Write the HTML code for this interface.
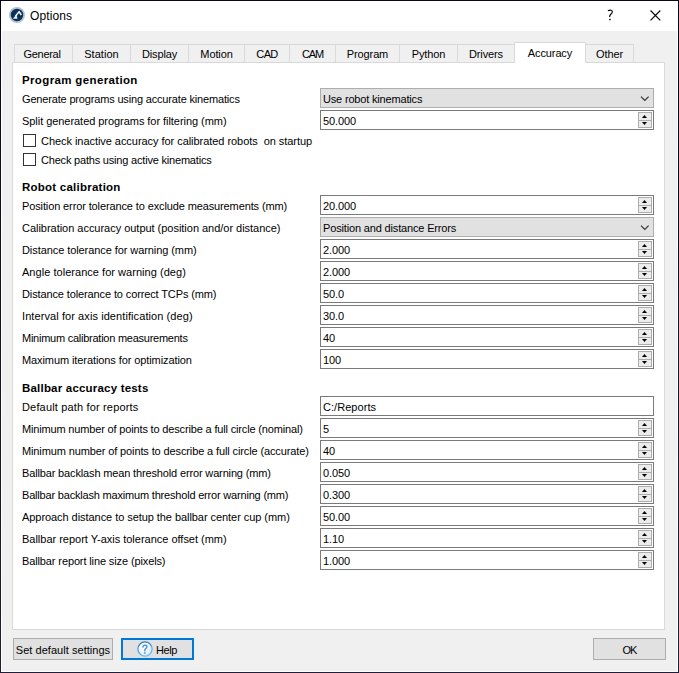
<!DOCTYPE html><html><head><meta charset="utf-8"><style>
html,body{margin:0;padding:0;}
body{width:679px;height:673px;overflow:hidden;position:relative;background:#f0f0f0;font-family:'Liberation Sans', sans-serif;}
body div{position:absolute;box-sizing:content-box;}
.t{font-size:11px;line-height:13px;letter-spacing:-0.12px;color:#000;white-space:pre;}
.b{font-weight:bold;font-size:11.5px;}
svg{position:absolute;}
</style></head><body>
<div style="left:0px;top:0px;width:679px;height:673px;background:#f0f0f0;"></div>
<div style="left:1px;top:1px;width:677px;height:30px;background:#ffffff;"></div>
<div style="left:1px;top:31px;width:1px;height:641px;background:#ffffff;"></div>
<div style="left:677px;top:31px;width:1px;height:641px;background:#ffffff;"></div>
<div style="left:1px;top:671px;width:677px;height:1px;background:#fcfcfa;"></div>
<div style="left:0px;top:0px;width:679px;height:1px;background:#07071a;"></div>
<div style="left:0px;top:0px;width:1px;height:673px;background:linear-gradient(#06061a,#1e1e3a);"></div>
<div style="left:678px;top:0px;width:1px;height:673px;background:linear-gradient(#06061a,#1e1e3a);"></div>
<div style="left:0px;top:672px;width:679px;height:1px;background:#1e1e3a;"></div>
<svg style="left:9px;top:7px" width="16" height="16" viewBox="0 0 16 16">
<circle cx="8" cy="8" r="8" fill="#b3c3d3"/>
<circle cx="8" cy="8" r="6.2" fill="#0c3259"/>
<path d="M3.9 11.8 L8.5 11.8 L7.4 7.6 Z" fill="#e8edf2"/>
<path d="M6.6 9 L10.1 4.6 L12.3 8" stroke="#ffffff" stroke-width="1.5" fill="none" stroke-linejoin="round"/>
</svg>
<div class="t" style="left:30px;top:9px;letter-spacing:0.117px;font-size:12px;line-height:14px;">Options</div>
<svg style="left:603px;top:7px" width="16" height="16" viewBox="0 0 16 16">
<path d="M4.9 3.7 Q6.5 3 8.1 3.2 Q9.6 3.6 9.3 5.1 Q9 6.2 7.8 7.2 Q6.6 8.2 6.6 9.9" stroke="#000" stroke-width="1.15" fill="none"/>
<circle cx="6.9" cy="12.5" r="0.85" fill="#000"/></svg>
<svg style="left:650px;top:10px" width="11" height="11" viewBox="0 0 11 11">
<path d="M0.5 0.5 L10.3 10.3 M10.3 0.5 L0.5 10.3" stroke="#000" stroke-width="1.1" fill="none"/>
</svg>
<div style="left:12px;top:62px;width:651px;height:566px;border:1px solid #d9d9d9;background:#ffffff;"></div>
<div style="left:14px;top:44px;width:57px;height:17px;border:1px solid #d9d9d9;background:#f0f0f0;border-bottom:none;height:17px;"></div>
<div class="t" style="left:12.55px;top:48px;width:59px;text-align:center;letter-spacing:-0.287px">General</div>
<div style="left:72px;top:44px;width:57px;height:17px;border:1px solid #d9d9d9;background:#f0f0f0;border-bottom:none;height:17px;"></div>
<div class="t" style="left:72px;top:48px;width:59px;text-align:center;letter-spacing:0.047px">Station</div>
<div style="left:130px;top:44px;width:57px;height:17px;border:1px solid #d9d9d9;background:#f0f0f0;border-bottom:none;height:17px;"></div>
<div class="t" style="left:130px;top:48px;width:59px;text-align:center;letter-spacing:-0.120px">Display</div>
<div style="left:188px;top:44px;width:55px;height:17px;border:1px solid #d9d9d9;background:#f0f0f0;border-bottom:none;height:17px;"></div>
<div class="t" style="left:188px;top:48px;width:57px;text-align:center;letter-spacing:-0.120px">Motion</div>
<div style="left:244px;top:44px;width:44px;height:17px;border:1px solid #d9d9d9;background:#f0f0f0;border-bottom:none;height:17px;"></div>
<div class="t" style="left:244px;top:48px;width:46px;text-align:center;letter-spacing:-0.620px">CAD</div>
<div style="left:289px;top:44px;width:45px;height:17px;border:1px solid #d9d9d9;background:#f0f0f0;border-bottom:none;height:17px;"></div>
<div class="t" style="left:289px;top:48px;width:47px;text-align:center;letter-spacing:-1.120px">CAM</div>
<div style="left:335px;top:44px;width:63px;height:17px;border:1px solid #d9d9d9;background:#f0f0f0;border-bottom:none;height:17px;"></div>
<div class="t" style="left:335px;top:48px;width:65px;text-align:center;letter-spacing:-0.120px">Program</div>
<div style="left:399px;top:44px;width:57px;height:17px;border:1px solid #d9d9d9;background:#f0f0f0;border-bottom:none;height:17px;"></div>
<div class="t" style="left:399px;top:48px;width:59px;text-align:center;letter-spacing:-0.120px">Python</div>
<div style="left:457px;top:44px;width:56px;height:17px;border:1px solid #d9d9d9;background:#f0f0f0;border-bottom:none;height:17px;"></div>
<div class="t" style="left:457px;top:48px;width:58px;text-align:center;letter-spacing:-0.120px">Drivers</div>
<div style="left:585px;top:44px;width:47px;height:17px;border:1px solid #d9d9d9;background:#f0f0f0;border-bottom:none;height:17px;"></div>
<div class="t" style="left:585px;top:48px;width:49px;text-align:center;">Other</div>
<div style="left:514px;top:42px;width:70px;height:20px;border:1px solid #d9d9d9;border-bottom:none;background:#fff;"></div>
<div class="t" style="left:514px;top:47px;width:72px;text-align:center;">Accuracy</div>
<div class="t b" style="left:22px;top:74px;letter-spacing:0.36px">Program generation</div>
<div class="t" style="left:22px;top:93px;letter-spacing:-0.168px;">Generate programs using accurate kinematics</div>
<div style="left:320px;top:88px;width:332px;height:18px;border:1px solid #adadad;background:#e1e1e1;"></div>
<div class="t" style="left:323px;top:93px;letter-spacing:-0.173px;">Use robot kinematics</div>
<svg style="left:640px;top:96px" width="10" height="6" viewBox="0 0 10 6"><path d="M1 0.6 L4.8 4.4 L8.6 0.6" stroke="#333" stroke-width="1.2" fill="none"/></svg>
<div class="t" style="left:22px;top:115px;letter-spacing:-0.049px;">Split generated programs for filtering (mm)</div>
<div style="left:320px;top:110px;width:332px;height:18px;border:1px solid #7a7a7a;background:#ffffff;"></div>
<div class="t" style="left:323px;top:115px;letter-spacing:-0.120px;">50.000</div>
<div style="left:638px;top:112px;width:12px;height:7px;border:1px solid #adadad;background:#ececec;"></div>
<div style="left:638px;top:120px;width:12px;height:6px;border:1px solid #adadad;background:#ececec;"></div>
<svg style="left:642px;top:115px" width="5" height="3" viewBox="0 0 5 3"><path d="M2.5 0 L5 3 L0 3 Z" fill="#000"/></svg>
<svg style="left:642px;top:122px" width="5" height="3" viewBox="0 0 5 3"><path d="M0 0 L5 0 L2.5 3 Z" fill="#000"/></svg>
<div style="left:23px;top:134px;width:11px;height:11px;border:1px solid #333333;background:#ffffff;"></div>
<div class="t" style="left:41px;top:135px;letter-spacing:-0.049px;">Check inactive accuracy for calibrated robots  on startup</div>
<div style="left:23px;top:153px;width:11px;height:11px;border:1px solid #333333;background:#ffffff;"></div>
<div class="t" style="left:41px;top:154px;letter-spacing:-0.194px;">Check paths using active kinematics</div>
<div class="t b" style="left:22px;top:181px;letter-spacing:0.24px">Robot calibration</div>
<div class="t" style="left:22px;top:200px;letter-spacing:-0.120px;">Position error tolerance to exclude measurements (mm)</div>
<div style="left:320px;top:195px;width:332px;height:18px;border:1px solid #7a7a7a;background:#ffffff;"></div>
<div class="t" style="left:323px;top:200px;letter-spacing:-0.120px;">20.000</div>
<div style="left:638px;top:197px;width:12px;height:7px;border:1px solid #adadad;background:#ececec;"></div>
<div style="left:638px;top:205px;width:12px;height:6px;border:1px solid #adadad;background:#ececec;"></div>
<svg style="left:642px;top:200px" width="5" height="3" viewBox="0 0 5 3"><path d="M2.5 0 L5 3 L0 3 Z" fill="#000"/></svg>
<svg style="left:642px;top:207px" width="5" height="3" viewBox="0 0 5 3"><path d="M0 0 L5 0 L2.5 3 Z" fill="#000"/></svg>
<div class="t" style="left:22px;top:222px;letter-spacing:-0.026px;">Calibration accuracy output (position and/or distance)</div>
<div style="left:320px;top:217px;width:332px;height:18px;border:1px solid #adadad;background:#e1e1e1;"></div>
<div class="t" style="left:323px;top:222px;letter-spacing:-0.157px;">Position and distance Errors</div>
<svg style="left:640px;top:225px" width="10" height="6" viewBox="0 0 10 6"><path d="M1 0.6 L4.8 4.4 L8.6 0.6" stroke="#333" stroke-width="1.2" fill="none"/></svg>
<div class="t" style="left:22px;top:244px;letter-spacing:-0.076px;">Distance tolerance for warning (mm)</div>
<div style="left:320px;top:239px;width:332px;height:18px;border:1px solid #7a7a7a;background:#ffffff;"></div>
<div class="t" style="left:323px;top:244px;letter-spacing:-0.120px;">2.000</div>
<div style="left:638px;top:241px;width:12px;height:7px;border:1px solid #adadad;background:#ececec;"></div>
<div style="left:638px;top:249px;width:12px;height:6px;border:1px solid #adadad;background:#ececec;"></div>
<svg style="left:642px;top:244px" width="5" height="3" viewBox="0 0 5 3"><path d="M2.5 0 L5 3 L0 3 Z" fill="#000"/></svg>
<svg style="left:642px;top:251px" width="5" height="3" viewBox="0 0 5 3"><path d="M0 0 L5 0 L2.5 3 Z" fill="#000"/></svg>
<div class="t" style="left:22px;top:266px;letter-spacing:0.036px;">Angle tolerance for warning (deg)</div>
<div style="left:320px;top:261px;width:332px;height:18px;border:1px solid #7a7a7a;background:#ffffff;"></div>
<div class="t" style="left:323px;top:266px;letter-spacing:-0.120px;">2.000</div>
<div style="left:638px;top:263px;width:12px;height:7px;border:1px solid #adadad;background:#ececec;"></div>
<div style="left:638px;top:271px;width:12px;height:6px;border:1px solid #adadad;background:#ececec;"></div>
<svg style="left:642px;top:266px" width="5" height="3" viewBox="0 0 5 3"><path d="M2.5 0 L5 3 L0 3 Z" fill="#000"/></svg>
<svg style="left:642px;top:273px" width="5" height="3" viewBox="0 0 5 3"><path d="M0 0 L5 0 L2.5 3 Z" fill="#000"/></svg>
<div class="t" style="left:22px;top:288px;letter-spacing:-0.120px;">Distance tolerance to correct TCPs (mm)</div>
<div style="left:320px;top:283px;width:332px;height:18px;border:1px solid #7a7a7a;background:#ffffff;"></div>
<div class="t" style="left:323px;top:288px;letter-spacing:-0.120px;">50.0</div>
<div style="left:638px;top:285px;width:12px;height:7px;border:1px solid #adadad;background:#ececec;"></div>
<div style="left:638px;top:293px;width:12px;height:6px;border:1px solid #adadad;background:#ececec;"></div>
<svg style="left:642px;top:288px" width="5" height="3" viewBox="0 0 5 3"><path d="M2.5 0 L5 3 L0 3 Z" fill="#000"/></svg>
<svg style="left:642px;top:295px" width="5" height="3" viewBox="0 0 5 3"><path d="M0 0 L5 0 L2.5 3 Z" fill="#000"/></svg>
<div class="t" style="left:22px;top:310px;letter-spacing:0.083px;">Interval for axis identification (deg)</div>
<div style="left:320px;top:305px;width:332px;height:18px;border:1px solid #7a7a7a;background:#ffffff;"></div>
<div class="t" style="left:323px;top:310px;letter-spacing:-0.120px;">30.0</div>
<div style="left:638px;top:307px;width:12px;height:7px;border:1px solid #adadad;background:#ececec;"></div>
<div style="left:638px;top:315px;width:12px;height:6px;border:1px solid #adadad;background:#ececec;"></div>
<svg style="left:642px;top:310px" width="5" height="3" viewBox="0 0 5 3"><path d="M2.5 0 L5 3 L0 3 Z" fill="#000"/></svg>
<svg style="left:642px;top:317px" width="5" height="3" viewBox="0 0 5 3"><path d="M0 0 L5 0 L2.5 3 Z" fill="#000"/></svg>
<div class="t" style="left:22px;top:332px;letter-spacing:-0.249px;">Minimum calibration measurements</div>
<div style="left:320px;top:327px;width:332px;height:18px;border:1px solid #7a7a7a;background:#ffffff;"></div>
<div class="t" style="left:323px;top:332px;letter-spacing:-0.120px;">40</div>
<div style="left:638px;top:329px;width:12px;height:7px;border:1px solid #adadad;background:#ececec;"></div>
<div style="left:638px;top:337px;width:12px;height:6px;border:1px solid #adadad;background:#ececec;"></div>
<svg style="left:642px;top:332px" width="5" height="3" viewBox="0 0 5 3"><path d="M2.5 0 L5 3 L0 3 Z" fill="#000"/></svg>
<svg style="left:642px;top:339px" width="5" height="3" viewBox="0 0 5 3"><path d="M0 0 L5 0 L2.5 3 Z" fill="#000"/></svg>
<div class="t" style="left:22px;top:354px;letter-spacing:-0.091px;">Maximum iterations for optimization</div>
<div style="left:320px;top:349px;width:332px;height:18px;border:1px solid #7a7a7a;background:#ffffff;"></div>
<div class="t" style="left:323px;top:354px;letter-spacing:-0.120px;">100</div>
<div style="left:638px;top:351px;width:12px;height:7px;border:1px solid #adadad;background:#ececec;"></div>
<div style="left:638px;top:359px;width:12px;height:6px;border:1px solid #adadad;background:#ececec;"></div>
<svg style="left:642px;top:354px" width="5" height="3" viewBox="0 0 5 3"><path d="M2.5 0 L5 3 L0 3 Z" fill="#000"/></svg>
<svg style="left:642px;top:361px" width="5" height="3" viewBox="0 0 5 3"><path d="M0 0 L5 0 L2.5 3 Z" fill="#000"/></svg>
<div class="t b" style="left:22px;top:382px;letter-spacing:0.2px">Ballbar accuracy tests</div>
<div class="t" style="left:22px;top:401px;letter-spacing:0.163px;">Default path for reports</div>
<div style="left:320px;top:396px;width:332px;height:18px;border:1px solid #7a7a7a;background:#ffffff;"></div>
<div class="t" style="left:323px;top:401px;letter-spacing:0.047px;">C:/Reports</div>
<div class="t" style="left:22px;top:423px;letter-spacing:-0.162px;">Minimum number of points to describe a full circle (nominal)</div>
<div style="left:320px;top:418px;width:332px;height:18px;border:1px solid #7a7a7a;background:#ffffff;"></div>
<div class="t" style="left:323px;top:423px;letter-spacing:-0.120px;">5</div>
<div style="left:638px;top:420px;width:12px;height:7px;border:1px solid #adadad;background:#ececec;"></div>
<div style="left:638px;top:428px;width:12px;height:6px;border:1px solid #adadad;background:#ececec;"></div>
<svg style="left:642px;top:423px" width="5" height="3" viewBox="0 0 5 3"><path d="M2.5 0 L5 3 L0 3 Z" fill="#000"/></svg>
<svg style="left:642px;top:430px" width="5" height="3" viewBox="0 0 5 3"><path d="M0 0 L5 0 L2.5 3 Z" fill="#000"/></svg>
<div class="t" style="left:22px;top:445px;letter-spacing:-0.120px;">Minimum number of points to describe a full circle (accurate)</div>
<div style="left:320px;top:440px;width:332px;height:18px;border:1px solid #7a7a7a;background:#ffffff;"></div>
<div class="t" style="left:323px;top:445px;letter-spacing:-0.120px;">40</div>
<div style="left:638px;top:442px;width:12px;height:7px;border:1px solid #adadad;background:#ececec;"></div>
<div style="left:638px;top:450px;width:12px;height:6px;border:1px solid #adadad;background:#ececec;"></div>
<svg style="left:642px;top:445px" width="5" height="3" viewBox="0 0 5 3"><path d="M2.5 0 L5 3 L0 3 Z" fill="#000"/></svg>
<svg style="left:642px;top:452px" width="5" height="3" viewBox="0 0 5 3"><path d="M0 0 L5 0 L2.5 3 Z" fill="#000"/></svg>
<div class="t" style="left:22px;top:467px;letter-spacing:-0.147px;">Ballbar backlash mean threshold error warning (mm)</div>
<div style="left:320px;top:462px;width:332px;height:18px;border:1px solid #7a7a7a;background:#ffffff;"></div>
<div class="t" style="left:323px;top:467px;letter-spacing:-0.120px;">0.050</div>
<div style="left:638px;top:464px;width:12px;height:7px;border:1px solid #adadad;background:#ececec;"></div>
<div style="left:638px;top:472px;width:12px;height:6px;border:1px solid #adadad;background:#ececec;"></div>
<svg style="left:642px;top:467px" width="5" height="3" viewBox="0 0 5 3"><path d="M2.5 0 L5 3 L0 3 Z" fill="#000"/></svg>
<svg style="left:642px;top:474px" width="5" height="3" viewBox="0 0 5 3"><path d="M0 0 L5 0 L2.5 3 Z" fill="#000"/></svg>
<div class="t" style="left:22px;top:489px;letter-spacing:-0.189px;">Ballbar backlash maximum threshold error warning (mm)</div>
<div style="left:320px;top:484px;width:332px;height:18px;border:1px solid #7a7a7a;background:#ffffff;"></div>
<div class="t" style="left:323px;top:489px;letter-spacing:-0.120px;">0.300</div>
<div style="left:638px;top:486px;width:12px;height:7px;border:1px solid #adadad;background:#ececec;"></div>
<div style="left:638px;top:494px;width:12px;height:6px;border:1px solid #adadad;background:#ececec;"></div>
<svg style="left:642px;top:489px" width="5" height="3" viewBox="0 0 5 3"><path d="M2.5 0 L5 3 L0 3 Z" fill="#000"/></svg>
<svg style="left:642px;top:496px" width="5" height="3" viewBox="0 0 5 3"><path d="M0 0 L5 0 L2.5 3 Z" fill="#000"/></svg>
<div class="t" style="left:22px;top:511px;letter-spacing:-0.058px;">Approach distance to setup the ballbar center cup (mm)</div>
<div style="left:320px;top:506px;width:332px;height:18px;border:1px solid #7a7a7a;background:#ffffff;"></div>
<div class="t" style="left:323px;top:511px;letter-spacing:-0.120px;">50.00</div>
<div style="left:638px;top:508px;width:12px;height:7px;border:1px solid #adadad;background:#ececec;"></div>
<div style="left:638px;top:516px;width:12px;height:6px;border:1px solid #adadad;background:#ececec;"></div>
<svg style="left:642px;top:511px" width="5" height="3" viewBox="0 0 5 3"><path d="M2.5 0 L5 3 L0 3 Z" fill="#000"/></svg>
<svg style="left:642px;top:518px" width="5" height="3" viewBox="0 0 5 3"><path d="M0 0 L5 0 L2.5 3 Z" fill="#000"/></svg>
<div class="t" style="left:22px;top:533px;letter-spacing:-0.013px;">Ballbar report Y-axis tolerance offset (mm)</div>
<div style="left:320px;top:528px;width:332px;height:18px;border:1px solid #7a7a7a;background:#ffffff;"></div>
<div class="t" style="left:323px;top:533px;letter-spacing:-0.120px;">1.10</div>
<div style="left:638px;top:530px;width:12px;height:7px;border:1px solid #adadad;background:#ececec;"></div>
<div style="left:638px;top:538px;width:12px;height:6px;border:1px solid #adadad;background:#ececec;"></div>
<svg style="left:642px;top:533px" width="5" height="3" viewBox="0 0 5 3"><path d="M2.5 0 L5 3 L0 3 Z" fill="#000"/></svg>
<svg style="left:642px;top:540px" width="5" height="3" viewBox="0 0 5 3"><path d="M0 0 L5 0 L2.5 3 Z" fill="#000"/></svg>
<div class="t" style="left:22px;top:555px;letter-spacing:-0.120px;">Ballbar report line size (pixels)</div>
<div style="left:320px;top:550px;width:332px;height:18px;border:1px solid #7a7a7a;background:#ffffff;"></div>
<div class="t" style="left:323px;top:555px;letter-spacing:-0.120px;">1.000</div>
<div style="left:638px;top:552px;width:12px;height:7px;border:1px solid #adadad;background:#ececec;"></div>
<div style="left:638px;top:560px;width:12px;height:6px;border:1px solid #adadad;background:#ececec;"></div>
<svg style="left:642px;top:555px" width="5" height="3" viewBox="0 0 5 3"><path d="M2.5 0 L5 3 L0 3 Z" fill="#000"/></svg>
<svg style="left:642px;top:562px" width="5" height="3" viewBox="0 0 5 3"><path d="M0 0 L5 0 L2.5 3 Z" fill="#000"/></svg>
<div style="left:13px;top:638px;width:98px;height:20px;border:1px solid #adadad;background:#e1e1e1;"></div>
<div class="t" style="left:13px;top:644px;letter-spacing:0.038px;width:100px;text-align:center;">Set default settings</div>
<div style="left:121px;top:638px;width:69px;height:18px;border:2px solid #0078d7;background:#e1e1e1;"></div>
<svg style="left:137px;top:641px" width="16" height="16" viewBox="0 0 16 16">
<defs><linearGradient id="hg" x1="0" y1="0" x2="0.3" y2="1"><stop offset="0" stop-color="#2f6fc4"/><stop offset="1" stop-color="#5cc6f2"/></linearGradient>
<radialGradient id="hf" cx="0.4" cy="0.35" r="0.7"><stop offset="0" stop-color="#ffffff"/><stop offset="1" stop-color="#e4e8ee"/></radialGradient></defs>
<circle cx="8" cy="8" r="7.1" fill="url(#hf)" stroke="url(#hg)" stroke-width="1.2"/>
<path d="M5.9 6.1 Q6 4.1 8 4.1 Q10 4.2 9.9 5.9 Q9.8 7 8.5 7.8 Q7.8 8.3 7.8 9.8" stroke="#4596de" stroke-width="1.45" fill="none" stroke-linecap="round"/>
<circle cx="7.8" cy="12" r="0.95" fill="#55a8e8"/>
</svg>
<div class="t" style="left:156px;top:644px;letter-spacing:-0.453px;">Help</div>
<div style="left:593px;top:638px;width:71px;height:20px;border:1px solid #adadad;background:#e1e1e1;"></div>
<div class="t" style="left:593px;top:644px;letter-spacing:-0.920px;width:73px;text-align:center;">OK</div>
</body></html>
